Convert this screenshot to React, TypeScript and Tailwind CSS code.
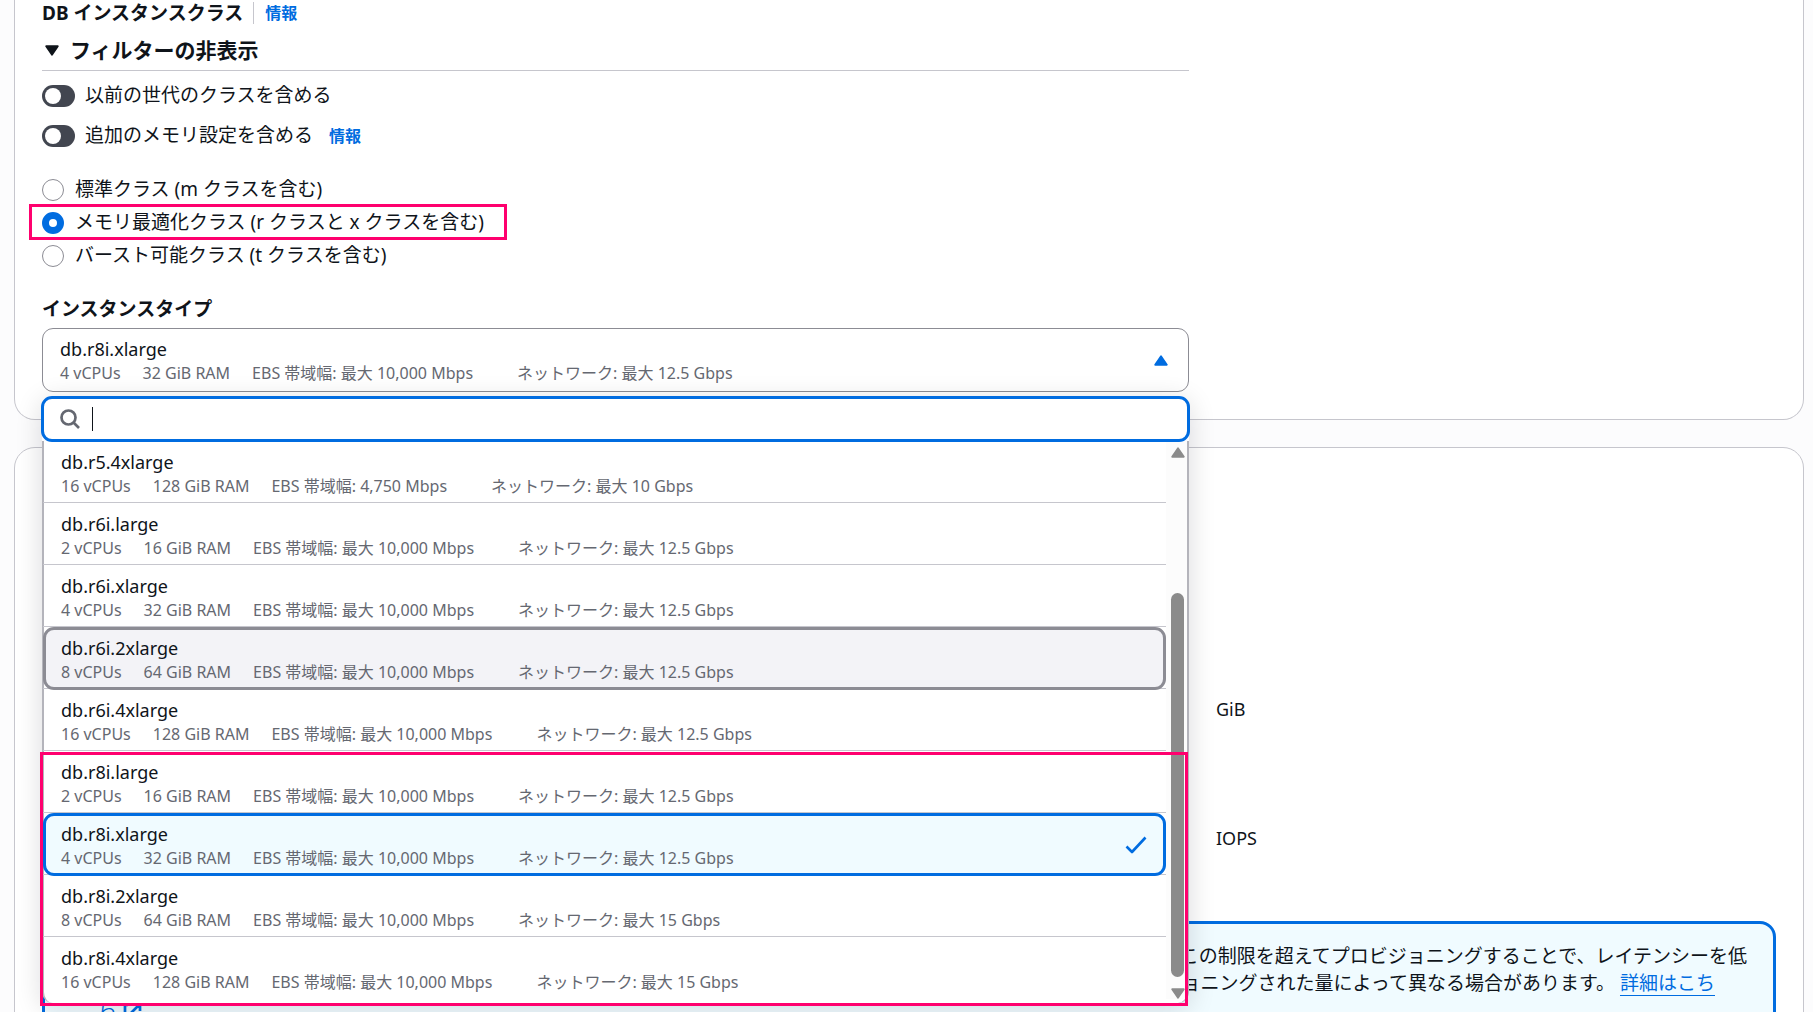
import React, { useState } from "react";

interface IInstanceType {
  name: string;
  cpu: string;
  ram: string;
  ebs: string;
  network: string;
}

const instanceTypes: IInstanceType[] = [
  { name: "db.r5.4xlarge", cpu: "16", ram: "128", ebs: "4,750", network: "10" },
  { name: "db.r6i.large", cpu: "2", ram: "16", ebs: "最大 10,000", network: "12.5" },
  { name: "db.r6i.xlarge", cpu: "4", ram: "32", ebs: "最大 10,000", network: "12.5" },
  { name: "db.r6i.2xlarge", cpu: "8", ram: "64", ebs: "最大 10,000", network: "12.5" },
  { name: "db.r6i.4xlarge", cpu: "16", ram: "128", ebs: "最大 10,000", network: "12.5" },
  { name: "db.r8i.large", cpu: "2", ram: "16", ebs: "最大 10,000", network: "12.5" },
  { name: "db.r8i.xlarge", cpu: "4", ram: "32", ebs: "最大 10,000", network: "12.5" },
  { name: "db.r8i.2xlarge", cpu: "8", ram: "64", ebs: "最大 10,000", network: "15" },
  { name: "db.r8i.4xlarge", cpu: "16", ram: "128", ebs: "最大 10,000", network: "15" },
];

const instanceClasses = [
  { value: "standard", label: "標準クラス (m クラスを含む)" },
  { value: "memory", label: "メモリ最適化クラス (r クラスと x クラスを含む)" },
  { value: "burstable", label: "バースト可能クラス (t クラスを含む)" },
];

function Triangle({ className }: { className: string }) {
  return (
    <svg viewBox="0 0 14 11" className={className} aria-hidden="true">
      <path
        d="M7 1.3 12.8 9.8H1.2z"
        fill="currentColor"
        stroke="currentColor"
        strokeWidth="1.8"
        strokeLinejoin="round"
      />
    </svg>
  );
}

function InfoLink() {
  return (
    <a href="#info" className="text-[16px] leading-6 font-bold text-[#006ce0]">
      情報
    </a>
  );
}

function Toggle({ id, label }: { id: string; label: string }) {
  return (
    <div className="flex items-center gap-[10px]">
      <input
        id={id}
        type="checkbox"
        role="switch"
        className="h-[22px] w-[33px] shrink-0 appearance-none rounded-full bg-[#424650] before:m-[3px] before:block before:size-4 before:rounded-full before:bg-white checked:bg-[#006ce0] checked:before:ml-[14px]"
      />
      <label htmlFor={id}>{label}</label>
    </div>
  );
}

function InstanceDetails({ item }: { item: IInstanceType }) {
  return (
    <>
      <span className="block text-[18px] leading-[27px] text-[#0f141a]">
        {item.name}
      </span>
      <span className="flex gap-[22px] text-[16px] leading-[21px] whitespace-nowrap text-[#656871]">
        <span>{item.cpu} vCPUs</span>
        <span>{item.ram} GiB RAM</span>
        <span>EBS 帯域幅: {item.ebs} Mbps</span>
        <span className="ml-[22px]">ネットワーク: 最大 {item.network} Gbps</span>
      </span>
    </>
  );
}

interface OptionProps {
  item: IInstanceType;
  selected: boolean;
  highlighted: boolean;
  onSelect: () => void;
}

function Option({ item, selected, highlighted, onSelect }: OptionProps) {
  return (
    <li className="relative h-[62px] border-b border-[#c6c6cd] last:border-b-0">
      {(selected || highlighted) && (
        <span
          className={`absolute inset-x-0 top-0 -bottom-[2px] z-10 rounded-[11px] border-[3px] ${
            selected
              ? "border-[#006ce0] bg-[#f0fbff]"
              : "border-[#8c8c94] bg-[#f3f3f7]"
          }`}
        />
      )}
      <button
        type="button"
        role="option"
        aria-selected={selected}
        onClick={onSelect}
        className="relative z-20 flex w-full items-center justify-between pt-2 pr-[19px] pl-[18px] text-left"
      >
        <span>
          <InstanceDetails item={item} />
        </span>
        {selected && (
          <svg
            viewBox="0 0 22 18"
            className="h-[18px] w-[22px]"
            fill="none"
            stroke="#006ce0"
            strokeWidth="2.6"
            strokeLinejoin="round"
            aria-hidden="true"
          >
            <path d="M1.5 10.5 7 16 20.5 1.5" />
          </svg>
        )}
      </button>
    </li>
  );
}

export default function App() {
  const [instanceClass, setInstanceClass] = useState("memory");
  const [instanceType, setInstanceType] = useState("db.r8i.xlarge");
  const [query, setQuery] = useState("");

  const current =
    instanceTypes.find((item) => item.name === instanceType) || instanceTypes[0];

  return (
    <div className="h-screen overflow-hidden bg-[#fcfcfd] pr-[9px] pl-[14px] font-['Noto_Sans','Noto_Sans_CJK_JP',sans-serif] text-[19px] leading-[27px] text-[#0f141a]">
      {/* Instance configuration */}
      <section className="relative z-10 rounded-b-[21px] border border-t-0 border-[#c6c6cd] bg-white px-[27px] pb-[27px]">
        <div className="max-w-[1147px]">
          <div className="flex h-[26px] items-center">
            <h3 className="mr-[11px] border-r border-[#c6c6cd] pr-[10px] leading-[22px] font-bold">
              DB インスタンスクラス
            </h3>
            <InfoLink />
          </div>

          <button
            type="button"
            aria-expanded="true"
            className="flex h-[45px] w-full items-center gap-[11px] border-b border-[#c6c6cd] pt-2 pb-1 pl-[3px] text-[21px] font-bold"
          >
            <Triangle className="h-[11px] w-[14px] rotate-180" />
            フィルターの非表示
          </button>

          <div className="flex flex-col gap-[13px] pt-[11px]">
            <Toggle id="previous" label="以前の世代のクラスを含める" />
            <div className="flex items-center gap-4">
              <Toggle id="memory-config" label="追加のメモリ設定を含める" />
              <InfoLink />
            </div>
          </div>

          <fieldset className="flex flex-col gap-[6px] pt-[27px]">
            {instanceClasses.map((item) => (
              <div
                key={item.value}
                className="relative flex items-center gap-[11px]"
              >
                {item.value === instanceClass && (
                  <span className="pointer-events-none absolute -top-[5px] -left-[13px] h-9 w-[478px] border-[3px] border-[#ff006e]" />
                )}
                <input
                  id={item.value}
                  type="radio"
                  name="instance-class"
                  checked={item.value === instanceClass}
                  onChange={() => setInstanceClass(item.value)}
                  className="size-[22px] shrink-0 appearance-none rounded-full border border-[#8c8c94] bg-white checked:border-[7px] checked:border-[#006ce0]"
                />
                <label htmlFor={item.value}>{item.label}</label>
              </div>
            ))}
          </fieldset>

          <h3 id="instance-type" className="pt-[27px] pb-[5px] font-bold">
            インスタンスタイプ
          </h3>

          <div className="relative">
            <button
              type="button"
              aria-haspopup="listbox"
              aria-labelledby="instance-type"
              className="flex h-16 w-full items-center justify-between rounded-[11px] border border-[#8c8c94] bg-white pr-5 pl-[17px] text-left"
            >
              <span>
                <InstanceDetails item={current} />
              </span>
              <Triangle className="h-[11px] w-[14px] text-[#006ce0]" />
            </button>

            {/* Dropdown menu */}
            <div className="absolute top-full right-0 left-0 mt-1 rounded-[11px] shadow-[0_5px_27px_1px_rgba(0,7,22,0.14)]">
              <div className="relative z-30 -mx-px flex h-[46px] items-center rounded-[11px] border-[3px] border-[#006ce0] bg-white pl-4">
                <svg
                  viewBox="0 0 20 20"
                  className="size-5"
                  fill="none"
                  stroke="#656871"
                  strokeWidth="2.7"
                  aria-hidden="true"
                >
                  <circle cx="8.5" cy="8.5" r="7" />
                  <path d="m13.5 13.5 5.5 5.5" />
                </svg>
                <span className="ml-3 h-6 w-px bg-[#0f141a]" />
                <input
                  type="text"
                  aria-label="インスタンスタイプを検索"
                  value={query}
                  onChange={(e) => setQuery(e.target.value)}
                  className="h-full flex-1 caret-transparent outline-none"
                />
              </div>
              <div className="-mt-px flex rounded-b-[11px] border-x-2 border-[#b4b4bb] bg-white pb-1">
                <ul role="listbox" className="-ml-px flex-1">
                  {instanceTypes.map((item) => (
                    <Option
                      key={item.name}
                      item={item}
                      selected={item.name === instanceType}
                      highlighted={item.name === "db.r6i.2xlarge"}
                      onSelect={() => setInstanceType(item.name)}
                    />
                  ))}
                </ul>
                {/* Scrollbar */}
                <div className="flex w-[21px] flex-col items-center bg-[#fcfcfc] pt-[6px] pl-[2px] text-[#8b8b8b]">
                  <Triangle className="h-[11px] w-[14px]" />
                  <div className="mt-[135px] mb-[11px] w-[13px] flex-1 rounded-full bg-[#8b8b8b]" />
                  <Triangle className="h-[11px] w-[14px] rotate-180" />
                </div>
              </div>
              <span className="pointer-events-none absolute right-px -bottom-[3px] -left-[2px] z-40 h-[254px] border-[3px] border-[#ff006e]" />
            </div>
          </div>
        </div>
      </section>

      {/* Storage */}
      <section className="mt-[27px] rounded-[21px] border border-[#c6c6cd] bg-white px-[27px] pt-[240px] pb-[27px]">
        <div className="flex items-center gap-[34px]">
          <input
            type="number"
            aria-label="GiB"
            className="h-[42px] w-[1140px] rounded-[11px] border border-[#8c8c94]"
          />
          <span className="text-[18px]">GiB</span>
        </div>
        <div className="mt-[87px] flex items-center gap-[34px]">
          <input
            type="number"
            aria-label="IOPS"
            className="h-[42px] w-[1140px] rounded-[11px] border border-[#8c8c94]"
          />
          <span className="text-[18px]">IOPS</span>
        </div>

        <div className="mt-[62px] rounded-2xl border-[3px] border-[#006ce0] bg-[#f0fbff] pt-[19px] pr-[26px] pb-4 pl-[53px]">
          <p className="text-right">
            この制限を超えてプロビジョニングすることで、レイテンシーを低
          </p>
          <p className="pr-8 text-right">
            ョニングされた量によって異なる場合があります。{" "}
            <a
              href="#detail"
              className="text-[#006ce0] underline decoration-1 underline-offset-[5px]"
            >
              詳細はこち
            </a>
          </p>
          <a href="#detail" className="flex items-center gap-[5px] text-[#006ce0]">
            ら
            <svg
              viewBox="0 0 20 20"
              className="size-5"
              fill="none"
              stroke="currentColor"
              strokeWidth="2.7"
              aria-hidden="true"
            >
              <path d="M11 3h7v7M18 3 9 12M6 4H3v14h14v-4" />
            </svg>
          </a>
        </div>
      </section>
    </div>
  );
}
